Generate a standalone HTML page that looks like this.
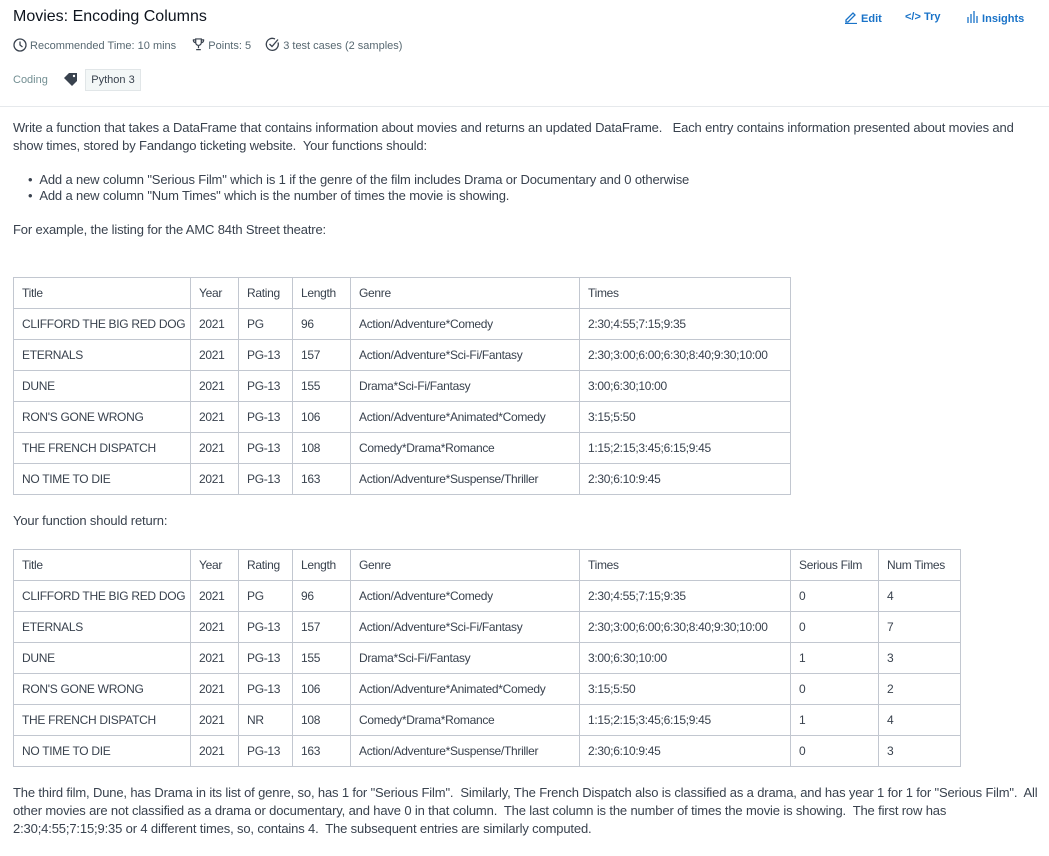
<!DOCTYPE html>
<html><head><meta charset="utf-8"><style>
body{margin:0;width:1049px;height:856px;background:#fff;font-family:"Liberation Sans",sans-serif;color:#39424e;position:relative;overflow:hidden}
.a{position:absolute;white-space:nowrap}
.t{font-size:13px;color:#39424e;letter-spacing:-0.15px}
table{position:absolute;left:13px;border-collapse:collapse;font-size:12px;color:#39424e;table-layout:fixed;letter-spacing:-0.3px}
td{border:1px solid #c2c7d0;height:31px;padding:0 0 0 8px;box-sizing:border-box;white-space:nowrap;overflow:hidden}
.blue{color:#1a73c8;font-weight:bold;font-size:11px}
</style></head><body>
<div class="a" style="left:13px;top:8px;font-size:16px;color:#0e141e">Movies: Encoding Columns</div>
<div class="a" style="left:13px;top:37px;font-size:11px;color:#576871">
<svg width="14" height="14" viewBox="0 0 14 14" style="vertical-align:-3px"><circle cx="7" cy="7" r="6" fill="none" stroke="#39424e" stroke-width="1.3"/><path d="M7 3.5V7l2.5 2" fill="none" stroke="#39424e" stroke-width="1.3"/></svg> Recommended Time: 10 mins
<span style="margin-left:13px"><svg width="13" height="13" viewBox="0 0 14 14" style="vertical-align:-2px"><path d="M4 1h6v4a3 3 0 0 1-6 0zM4 2H1.5a2.5 2.5 0 0 0 2.5 3M10 2h2.5a2.5 2.5 0 0 1-2.5 3M7 8v3M4.5 12.5h5" fill="none" stroke="#39424e" stroke-width="1.3"/></svg> Points: 5</span>
<span style="margin-left:11px"><svg width="15" height="15" viewBox="0 0 15 15" style="vertical-align:-3px"><path d="M13 5.5A6 6 0 1 1 10 2" fill="none" stroke="#39424e" stroke-width="1.3"/><path d="M4.5 7l2.5 2.5 6-7" fill="none" stroke="#39424e" stroke-width="1.3"/></svg> 3 test cases (2 samples)</span></div>
<div class="a" style="left:13px;top:74px;font-size:11px;color:#738f93">Coding</div>
<svg class="a" style="left:63px;top:72px" width="16" height="14" viewBox="0 0 16 14"><path d="M1 6L6 1h8v8l-5 5z" fill="#39424e"/><circle cx="11" cy="4" r="1.2" fill="#fff"/></svg>
<div class="a" style="left:85px;top:69px;height:22px;width:56px;background:#f3f7f7;border:1px solid #e1e6e8;box-sizing:border-box;font-size:11px;color:#39424e;line-height:20px;text-align:center">Python 3</div>
<div class="a blue" style="left:844px;top:10px"><svg width="14" height="14" viewBox="0 0 14 14" style="vertical-align:-2px"><path d="M2 10l7-7 2 2-7 7H2zM1 13.5h12" fill="none" stroke="#1a73c8" stroke-width="1.3"/></svg> Edit</div>
<div class="a blue" style="left:905px;top:11px">&lt;/&gt; Try</div>
<div class="a blue" style="left:967px;top:11px"><svg width="12" height="12" viewBox="0 0 12 12" style="vertical-align:-1px"><path d="M1 6v6M4 3v9M7 0v12M10 5v7" stroke="#1a73c8" stroke-width="1.3"/></svg> Insights</div>
<div class="a" style="left:0;top:106px;width:1049px;height:1px;background:#e6e9ec"></div>
<div class="a t" style="left:13px;top:119px;line-height:18px">Write a function that takes a DataFrame that contains information about movies and returns an updated DataFrame.&nbsp;&nbsp; Each entry contains information presented about movies and<br>show times, stored by Fandango ticketing website.&nbsp; Your functions should:</div>
<div class="a t" style="left:28px;top:172px;line-height:16px">• &nbsp;Add a new column "Serious Film" which is 1 if the genre of the film includes Drama or Documentary and 0 otherwise<br>• &nbsp;Add a new column "Num Times" which is the number of times the movie is showing.</div>
<div class="a t" style="left:13px;top:222px">For example, the listing for the AMC 84th Street theatre:</div>
<table style="top:277px;width:777px">
<colgroup><col style="width:177px"><col style="width:48px"><col style="width:54px"><col style="width:58px"><col style="width:229px"><col style="width:211px"></colgroup>
<tr><td>Title</td><td>Year</td><td>Rating</td><td>Length</td><td>Genre</td><td>Times</td></tr>
<tr><td>CLIFFORD THE BIG RED DOG</td><td>2021</td><td>PG</td><td>96</td><td>Action/Adventure*Comedy</td><td>2:30;4:55;7:15;9:35</td></tr>
<tr><td>ETERNALS</td><td>2021</td><td>PG-13</td><td>157</td><td>Action/Adventure*Sci-Fi/Fantasy</td><td>2:30;3:00;6:00;6:30;8:40;9:30;10:00</td></tr>
<tr><td>DUNE</td><td>2021</td><td>PG-13</td><td>155</td><td>Drama*Sci-Fi/Fantasy</td><td>3:00;6:30;10:00</td></tr>
<tr><td>RON'S GONE WRONG</td><td>2021</td><td>PG-13</td><td>106</td><td>Action/Adventure*Animated*Comedy</td><td>3:15;5:50</td></tr>
<tr><td>THE FRENCH DISPATCH</td><td>2021</td><td>PG-13</td><td>108</td><td>Comedy*Drama*Romance</td><td>1:15;2:15;3:45;6:15;9:45</td></tr>
<tr><td>NO TIME TO DIE</td><td>2021</td><td>PG-13</td><td>163</td><td>Action/Adventure*Suspense/Thriller</td><td>2:30;6:10:9:45</td></tr>
</table>
<div class="a t" style="left:13px;top:513px">Your function should return:</div>
<table style="top:549px;width:947px">
<colgroup><col style="width:177px"><col style="width:48px"><col style="width:54px"><col style="width:58px"><col style="width:229px"><col style="width:211px"><col style="width:88px"><col style="width:82px"></colgroup>
<tr><td>Title</td><td>Year</td><td>Rating</td><td>Length</td><td>Genre</td><td>Times</td><td>Serious Film</td><td>Num Times</td></tr>
<tr><td>CLIFFORD THE BIG RED DOG</td><td>2021</td><td>PG</td><td>96</td><td>Action/Adventure*Comedy</td><td>2:30;4:55;7:15;9:35</td><td>0</td><td>4</td></tr>
<tr><td>ETERNALS</td><td>2021</td><td>PG-13</td><td>157</td><td>Action/Adventure*Sci-Fi/Fantasy</td><td>2:30;3:00;6:00;6:30;8:40;9:30;10:00</td><td>0</td><td>7</td></tr>
<tr><td>DUNE</td><td>2021</td><td>PG-13</td><td>155</td><td>Drama*Sci-Fi/Fantasy</td><td>3:00;6:30;10:00</td><td>1</td><td>3</td></tr>
<tr><td>RON'S GONE WRONG</td><td>2021</td><td>PG-13</td><td>106</td><td>Action/Adventure*Animated*Comedy</td><td>3:15;5:50</td><td>0</td><td>2</td></tr>
<tr><td>THE FRENCH DISPATCH</td><td>2021</td><td>NR</td><td>108</td><td>Comedy*Drama*Romance</td><td>1:15;2:15;3:45;6:15;9:45</td><td>1</td><td>4</td></tr>
<tr><td>NO TIME TO DIE</td><td>2021</td><td>PG-13</td><td>163</td><td>Action/Adventure*Suspense/Thriller</td><td>2:30;6:10:9:45</td><td>0</td><td>3</td></tr>
</table>
<div class="a t" style="left:13px;top:784px;line-height:18px">The third film, Dune, has Drama in its list of genre, so, has 1 for "Serious Film".&nbsp; Similarly, The French Dispatch also is classified as a drama, and has year 1 for 1 for "Serious Film".&nbsp; All<br>other movies are not classified as a drama or documentary, and have 0 in that column.&nbsp; The last column is the number of times the movie is showing.&nbsp; The first row has<br>2:30;4:55;7:15;9:35 or 4 different times, so, contains 4.&nbsp; The subsequent entries are similarly computed.</div>
</body></html>
